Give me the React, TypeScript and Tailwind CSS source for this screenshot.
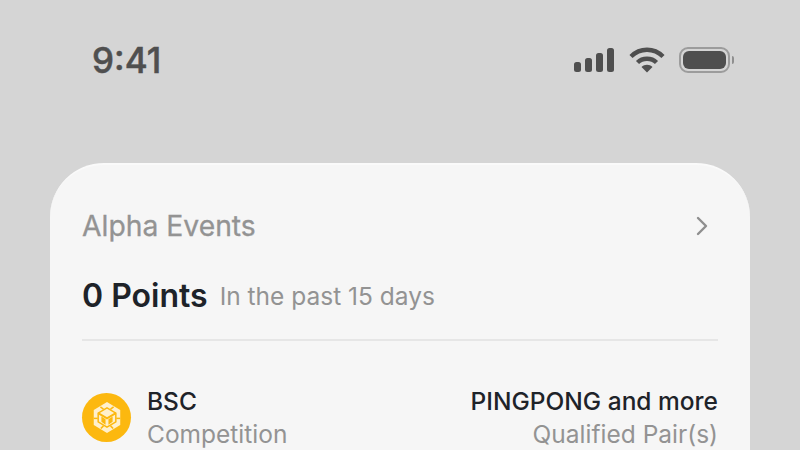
import { ChevronRight } from "lucide-react";

function StatusIcons() {
  return (
    <div className="flex items-center gap-[14px]">
      <svg width="41" height="24" viewBox="0 0 41 24" fill="#4f4f4f">
        <rect x="0" y="14" width="7" height="10" rx="2.5" />
        <rect x="11" y="10" width="7" height="14" rx="2.5" />
        <rect x="22" y="5" width="7" height="19" rx="2.5" />
        <rect x="33" y="0" width="7" height="24" rx="2.5" />
      </svg>
      <svg width="36" height="26" viewBox="0 0 36 26" fill="none" stroke="#4f4f4f" strokeWidth="4.4">
        <path d="M2 9.5C11 0.5 25 0.5 34 9.5" />
        <path d="M8.5 15.5C13.5 10.5 22.5 10.5 27.5 15.5" />
        <path d="M12.5 20L18 25.5L23.5 20C20.5 17 15.5 17 12.5 20Z" fill="#4f4f4f" stroke="none" />
      </svg>
      <div className="flex items-center gap-[2px]">
        <div className="h-[26px] w-[51px] rounded-[9px] border-2 border-[#9c9c9c] p-[2px]">
          <div className="h-full w-full rounded-[6px] bg-[#4f4f4f]" />
        </div>
        <div className="h-[8px] w-[2px] rounded-r-full bg-[#8f8f8f]" />
      </div>
    </div>
  );
}

function BnbLogo() {
  return (
    <div className="-mt-[1px] flex h-[49px] w-[49px] items-center justify-center rounded-full bg-[#fcb80f]">
      <svg width="30" height="33" viewBox="0 0 34 37" fill="none" stroke="#fcb80f" strokeWidth="1.7">
        <path d="M17 1L32 10V27L17 36L2 27V10Z" fill="#fff0cc" stroke="none" />
        <path d="M17 7.5L27 13.5V23.5L17 29.5L7 23.5V13.5Z" />
        <path d="M9.5 6.5L13 9" />
        <path d="M24.5 6.5L21 9" />
        <path d="M2 19.5H6.5" />
        <path d="M32 19.5H27.5" />
        <path d="M10 31L13 28" />
        <path d="M24 31L21 28" />
        <path d="M7 13.5L17 19.5L27 13.5" strokeWidth="2.2" />
        <path d="M11.5 19V23L14.5 25V21Z" fill="#fcb80f" />
        <path d="M22.5 19V23L19.5 25V21Z" fill="#fcb80f" />
      </svg>
    </div>
  );
}

export default function App() {
  return (
    <div className="flex h-[450px] w-[800px] flex-col overflow-hidden bg-[#d5d5d5] font-['Inter',sans-serif]">
      <div className="flex h-[163px] shrink-0 items-start justify-between pl-[92px] pr-[66px] pt-[38px]">
        <span className="text-[35px] font-medium leading-[44px] text-[#4f4f4f] [-webkit-text-stroke:0.5px_#4f4f4f]">9:41</span>
        <div className="pt-[9px]">
          <StatusIcons />
        </div>
      </div>
      <div className="mx-[50px] flex-1 rounded-t-[54px] border-t-2 border-[#fafafa] bg-[#f6f6f6] px-[32px] pt-[44px]">
        <div className="flex h-[34px] items-center justify-between">
          <span className="text-[28.3px] font-normal leading-[34px] text-[#939393] [-webkit-text-stroke:0.3px_#939393]">Alpha Events</span>
          <ChevronRight size={32} strokeWidth={1.8} className="mr-[-1px] translate-x-[-1px] text-[#8e8e8e]" />
        </div>
        <div className="mt-[33px] flex items-center gap-[12px]">
          <span className="text-[32px] font-semibold leading-[40px] text-[#1e2329]">0 Points</span>
          <span className="text-[24.5px] leading-[40px] text-[#939393]">In the past 15 days</span>
        </div>
        <div className="mt-[23px] h-[2px] bg-[#e6e6e6]" />
        <div className="mt-[44px] flex items-start justify-between">
          <div className="flex items-center gap-[16px]">
            <BnbLogo />
            <div className="flex flex-col">
              <span className="text-[24.5px] font-medium leading-[33px] text-[#1e2329]">BSC</span>
              <span className="text-[24.5px] leading-[33px] text-[#939393]">Competition</span>
            </div>
          </div>
          <div className="flex flex-col items-end">
            <span className="text-[24.5px] font-medium leading-[33px] text-[#1e2329]">PINGPONG and more</span>
            <span className="text-[24.5px] leading-[33px] text-[#939393]">Qualified Pair(s)</span>
          </div>
        </div>
      </div>
    </div>
  );
}
